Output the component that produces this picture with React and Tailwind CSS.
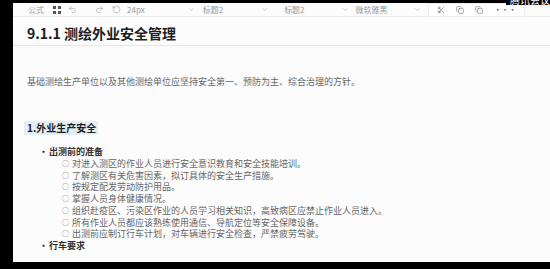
import React from "react";
import { Undo2, Redo2, RotateCcw, Scissors, Copy, ChevronDown } from "lucide-react";

const font = { fontFamily: '"Noto Sans CJK SC", "Noto Sans", sans-serif' };

function Chev({ className }) {
  return <ChevronDown className={className} size={7} strokeWidth={1.5} color="#9a9a9a" />;
}

export default function App() {
  const subs = [
    "对进入测区的作业人员进行安全意识教育和安全技能培训。",
    "了解测区有关危害因素，拟订具体的安全生产措施。",
    "按规定配发劳动防护用品。",
    "掌握人员身体健康情况。",
    "组织赴疫区、污染区作业的人员学习相关知识，高致病区应禁止作业人员进入。",
    "所有作业人员都应该熟练使用通信、导航定位等安全保障设备。",
    "出测前应制订行车计划，对车辆进行安全检查，严禁疲劳驾驶。",
  ];
  return (
    <div className="relative w-[550px] h-[269px] bg-black flex overflow-hidden" style={font}>
      <div className="w-[13px] shrink-0" />
      <div className="flex-1 flex flex-col min-w-0">
        <div className="h-[3px] shrink-0" />
        <div className="bg-[#fcfcfc] h-[259px] flex flex-col overflow-hidden">
          {/* toolbar */}
          <div className="h-[14px] shrink-0 flex items-center border-b border-[#ededed] text-[8px] leading-[10px] text-[#9a9a9a]">
            <span className="ml-[15px]">公式</span>
            <svg className="ml-[9px]" width="8" height="8" viewBox="0 0 8 8">
              <rect x="0" y="0" width="3" height="3" fill="#555" />
              <rect x="5" y="0" width="3" height="3" fill="#555" />
              <rect x="0" y="5" width="3" height="3" fill="#555" />
              <rect x="5" y="5" width="3" height="3" fill="#555" />
            </svg>
            <Undo2 className="ml-[7px]" size={9} strokeWidth={1.3} color="#8a8a8a" />
            <Redo2 className="ml-[18px]" size={9} strokeWidth={1.3} color="#8a8a8a" />
            <RotateCcw className="ml-[8px]" size={9} strokeWidth={1.3} color="#8a8a8a" />
            <span className="ml-[6px]">24px</span>
            <Chev className="ml-[43px]" />
            <span className="ml-[8px]">标题2</span>
            <Chev className="ml-[38px]" />
            <span className="ml-[16px]">标题2</span>
            <Chev className="ml-[37px]" />
            <span className="ml-[7px]">微软雅黑</span>
            <Chev className="ml-[26px]" />
            <div className="ml-[7px] h-[14px] flex items-center border border-[#eeeeee] bg-white px-[8px] gap-[11px]">
              <Scissors size={8} strokeWidth={1.5} color="#555" />
              <Copy size={8} strokeWidth={1.5} color="#555" />
              <Copy size={8} strokeWidth={1.5} color="#555" />
              <span className="text-[#555] text-[8px] leading-[8px] tracking-[-0.5px]">···</span>
            </div>
          </div>

          {/* heading */}
          <div className="h-[29px] shrink-0 pt-[6px] pl-[14px] border-b border-[#e6e6e6]">
            <div className="text-[14px] leading-[20px] font-bold text-[#1f1f1f]">9.1.1 测绘外业安全管理</div>
          </div>

          <div className="pl-[14px]">
            <p className="mt-[30px] text-[9px] leading-[12px] text-[#666]">
              基础测绘生产单位以及其他测绘单位应坚持安全第一、预防为主、综合治理的方针。
            </p>
            <div className="mt-[33px] ml-[-3px] w-[74px] h-[14px] bg-[#e3eef9] flex items-center pl-[3px]">
              <span className="text-[10px] leading-[14px] font-bold text-[#1f1f1f]">1.外业生产安全</span>
            </div>
            <ul className="mt-[11px] text-[9px] leading-[11.75px]">
              <li className="flex">
                <span className="w-[22px] pl-[12px] text-[#333] font-bold">•</span>
                <div className="flex flex-col">
                  <span className="font-bold text-[#333]">出测前的准备</span>
                  <ul>
                    {subs.map((s) => (
                      <li key={s} className="flex text-[#666]">
                        <span className="w-[23px] pl-[13px] text-[7px]">○</span>
                        <span className="whitespace-nowrap">{s}</span>
                      </li>
                    ))}
                  </ul>
                </div>
              </li>
              <li className="flex">
                <span className="w-[22px] pl-[12px] text-[#333] font-bold">•</span>
                <span className="font-bold text-[#333]">行车要求</span>
              </li>
            </ul>
          </div>
        </div>
      </div>
      {/* watermark at top right */}
      <div className="absolute top-0 right-0 w-[44px] h-[5px] bg-black overflow-hidden">
        <div className="text-white text-[10px] leading-[10px] mt-[-5px] ml-[4px] whitespace-nowrap">腾讯会议</div>
      </div>
    </div>
  );
}
